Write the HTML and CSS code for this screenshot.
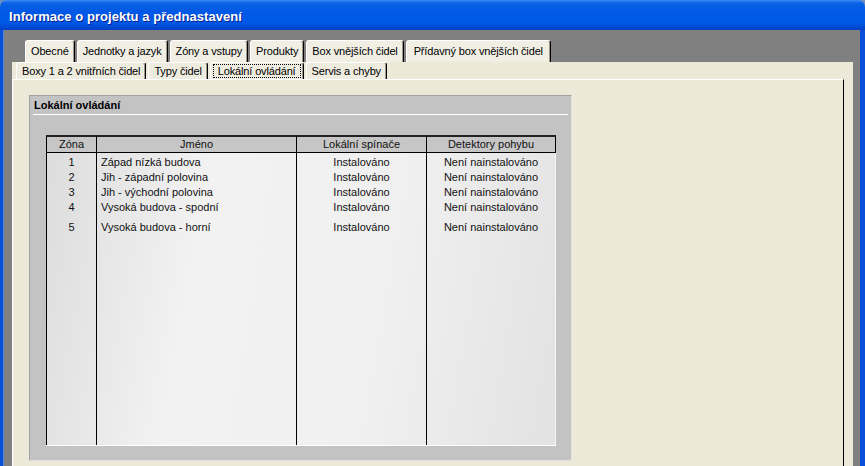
FILE: index.html
```html
<!DOCTYPE html>
<html lang="cs">
<head>
    <meta charset="UTF-8">
    <title>Informace o projektu a přednastavení</title>
    <link rel="stylesheet" href="styles.css">
</head>
<body>
    <div class="window">
        <div class="titlebar">Informace o projektu a přednastavení</div>
        <div class="frame">
            <div class="tabs tabs-back">
                <div class="tab">Obecné</div>
                <div class="tab">Jednotky a jazyk</div>
                <div class="tab">Zóny a vstupy</div>
                <div class="tab">Produkty</div>
                <div class="tab">Box vnějších čidel</div>
                <div class="tab tab-wide">Přídavný box vnějších čidel</div>
            </div>
            <div class="dialog">
                <div class="tabs tabs-front">
                    <div class="tab">Boxy 1 a 2 vnitřních čidel</div>
                    <div class="tab">Typy čidel</div>
                    <div class="tab active"><span class="focus">Lokální ovládání</span></div>
                    <div class="tab">Servis a chyby</div>
                </div>
                <div class="page">
                    <div class="group">
                        <div class="group-title">Lokální ovládání</div>
                        <div class="grid">
                            <div class="th">Zóna</div>
                            <div class="th">Jméno</div>
                            <div class="th">Lokální spínače</div>
                            <div class="th">Detektory pohybu</div>

                            <div class="td first">1</div>
                            <div class="td first name">Západ nízká budova</div>
                            <div class="td first">Instalováno</div>
                            <div class="td first">Není nainstalováno</div>

                            <div class="td">2</div>
                            <div class="td name">Jih - západní polovina</div>
                            <div class="td">Instalováno</div>
                            <div class="td">Není nainstalováno</div>

                            <div class="td">3</div>
                            <div class="td name">Jih - východní polovina</div>
                            <div class="td">Instalováno</div>
                            <div class="td">Není nainstalováno</div>

                            <div class="td">4</div>
                            <div class="td name">Vysoká budova - spodní</div>
                            <div class="td">Instalováno</div>
                            <div class="td">Není nainstalováno</div>

                            <div class="td tall">5</div>
                            <div class="td tall name">Vysoká budova - horní</div>
                            <div class="td tall">Instalováno</div>
                            <div class="td tall">Není nainstalováno</div>

                            <div class="td"></div>
                            <div class="td"></div>
                            <div class="td"></div>
                            <div class="td"></div>
                        </div>
                    </div>
                </div>
            </div>
        </div>
    </div>
</body>
</html>
```

FILE: styles.css
```css
body {
    margin: 0;
    background: #6f8fc0;
    font-family: "Liberation Sans", Arial, sans-serif;
    font-size: 11px;
    color: #000;
}

.window {
    width: 865px;
    height: 466px;
    display: flex;
    flex-direction: column;
    overflow: hidden;
}

.titlebar {
    height: 30px;
    box-sizing: border-box;
    padding: 3px 0 0 9px;
    line-height: 27px;
    color: #fff;
    font-weight: bold;
    font-size: 13px;
    letter-spacing: 0.05px;
    text-shadow: 1px 1px #0a1e8c;
    border-radius: 7px 7px 0 0;
    background: linear-gradient(#3d8cf5 0, #0a62e6 3px, #0058e6 12px, #005ae8 22px, #0048d0 28px, #0a3fc0 30px);
}

.frame {
    flex: 1;
    display: flex;
    flex-direction: column;
    background: #808080;
    border-left: 3px solid #0a4fd8;
    border-right: 5px solid #0a4fd8;
    box-shadow: inset 1px 0 #5a86e0;
    padding: 0 7px 0 9px;
}

.tabs {
    display: flex;
    gap: 2px;
}

.tabs-back {
    height: 32px;
    box-sizing: border-box;
    padding: 10px 0 0 13px;
}

.tabs-front {
    height: 17px;
    padding-left: 4px;
}

.tab {
    background: #f1efe4;
    border-top: 1px solid #fff;
    border-left: 1px solid #fff;
    border-right: 1px solid #000;
    box-shadow: inset -1px 0 #9d9a8c;
    border-radius: 3px 3px 0 0;
    padding: 0 5px;
    letter-spacing: -0.15px;
    white-space: nowrap;
}

.tab.tab-wide {
    padding: 0 7px;
}

.tabs-back .tab {
    line-height: 21px;
}

.tabs-front .tab {
    line-height: 16px;
    background: #eeebdf;
}

.tab.active {
    padding: 0 2px;
}

.focus {
    display: inline-block;
    line-height: 12px;
    padding: 0 4px;
    border: 1px dotted #000;
}

.dialog {
    flex: 1;
    display: flex;
    flex-direction: column;
    background: #ece9d8;
}

.page {
    flex: 1;
    margin-right: 9px;
    border-top: 1px solid #fff;
    border-left: 1px solid #fff;
    border-right: 1px solid #000;
    padding: 15px 0 0 16px;
}

.group {
    width: 543px;
    height: 366px;
    box-sizing: border-box;
    background: #c3c3c3;
    border: 1px solid;
    border-color: #a2a2a2 #e2e2e2 #e2e2e2 #a2a2a2;
}

.group-title {
    margin: 0 3px;
    padding-left: 1px;
    line-height: 18px;
    font-weight: bold;
    border-bottom: 1px solid #fff;
}

.grid {
    margin: 20px 0 0 16px;
    width: 510px;
    height: 311px;
    box-sizing: border-box;
    display: grid;
    grid-template-columns: 50px 200px 130px 130px;
    grid-template-rows: 18px auto auto auto auto auto 1fr;
    background: linear-gradient(100deg, #dcdcdc 0%, #f2f2f2 30%, #f0f0f0 65%, #e2e2e2 100%);
    border-bottom: 1px solid #fff;
}

.th,
.td {
    box-sizing: border-box;
    border-left: 1px solid #000;
    text-align: center;
    white-space: nowrap;
    color: #111;
}

.th {
    background: #c6c6c6;
    border-top: 2px solid #222;
    border-bottom: 1px solid #000;
    line-height: 15px;
}

.th:nth-child(4) {
    border-right: 1px solid #000;
}

.td {
    line-height: 15px;
}

.td:nth-child(4n) {
    border-right: 1px solid #f4f4f4;
}

.td.name {
    text-align: left;
    padding-left: 4px;
}

.td.first {
    padding-top: 2px;
}

.td.tall {
    padding-top: 5px;
}
```
